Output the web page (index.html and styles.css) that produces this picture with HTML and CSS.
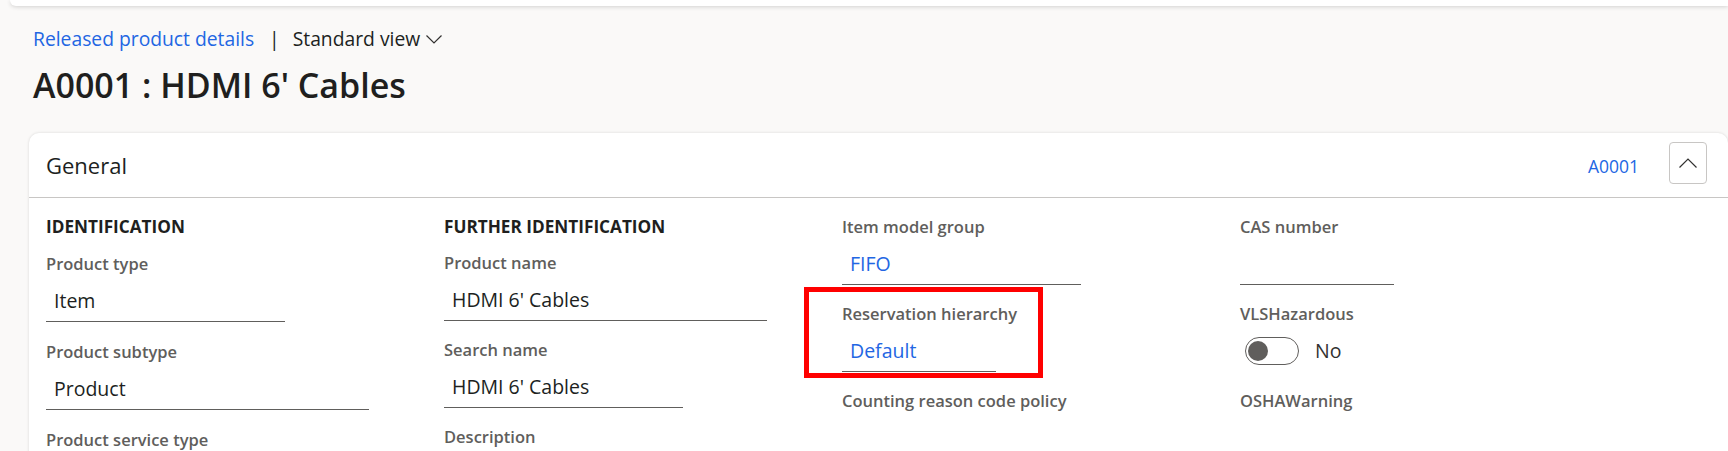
FILE: index.html
```html
<!DOCTYPE html>
<html lang="en">
<head>
<meta charset="utf-8">
<title>Released product details</title>
<link rel="stylesheet" href="styles.css">
</head>
<body>
<div class="topbar"></div>
<header class="page-head">
  <nav class="crumbs">
    <a class="crumb-link">Released product details</a>
    <span class="sep">|</span>
    <span class="view">Standard view</span>
    <svg class="view-chev" width="16" height="9" viewBox="0 0 16 9"><polyline points="0.5,0.5 8,8 15.5,0.5" fill="none" stroke="#323130" stroke-width="1.2"/></svg>
  </nav>
  <h1 class="title">A0001 : HDMI 6' Cables</h1>
</header>

<section class="card">
  <div class="card-head">
    <div class="card-title">General</div>
    <a class="card-id">A0001</a>
    <button class="collapse-btn" type="button" aria-label="Collapse">
      <svg width="18" height="10" viewBox="0 0 18 10"><polyline points="0.5,9.5 9,1 17.5,9.5" fill="none" stroke="#323130" stroke-width="1.2"/></svg>
    </button>
  </div>
  <div class="card-body">
    <div class="col col-wide">
      <div class="section-title">IDENTIFICATION</div>
      <div class="field"><div class="label">Product type</div><div class="input w-md">Item</div></div>
      <div class="field"><div class="label">Product subtype</div><div class="input w-lg">Product</div></div>
      <div class="field"><div class="label">Product service type</div><div class="input w-md"></div></div>
    </div>
    <div class="col">
      <div class="section-title">FURTHER IDENTIFICATION</div>
      <div class="field"><div class="label">Product name</div><div class="input w-lg">HDMI 6' Cables</div></div>
      <div class="field"><div class="label">Search name</div><div class="input w-md">HDMI 6' Cables</div></div>
      <div class="field"><div class="label">Description</div><div class="input w-lg"></div></div>
    </div>
    <div class="col">
      <div class="field"><div class="label">Item model group</div><div class="input w-md link">FIFO</div></div>
      <div class="field"><div class="label">Reservation hierarchy</div><div class="input w-sm link">Default</div><div class="mark"></div></div>
      <div class="field"><div class="label">Counting reason code policy</div><div class="input w-md"></div></div>
    </div>
    <div class="col">
      <div class="field"><div class="label">CAS number</div><div class="input w-sm"></div></div>
      <div class="field"><div class="label">VLSHazardous</div>
        <div class="toggle-row"><span class="toggle"><span class="knob"></span></span><span class="toggle-text">No</span></div>
      </div>
      <div class="field"><div class="label">OSHAWarning</div><div class="input w-sm"></div></div>
    </div>
  </div>
</section>
</body>
</html>
```

FILE: styles.css
```css
html, body {
  margin: 0;
  height: 100%;
  overflow: hidden;
}
body {
  background: #faf9f8;
  font-family: "Open Sans", "Noto Sans", sans-serif;
  color: #201f1e;
}
.topbar {
  height: 6px;
  margin-left: 10px;
  background: #fff;
  border-radius: 0 0 0 8px;
  box-shadow: 0 1px 4px rgba(0, 0, 0, 0.16);
}
.page-head {
  padding-left: 33px;
}
.crumbs {
  display: flex;
  align-items: center;
  margin-top: 20px;
  height: 26px;
  font-size: 19.3px;
  line-height: 26px;
}
.crumb-link {
  color: #2266e3;
}
.sep {
  margin: 0 13px 0 15px;
  color: #201f1e;
}
.view {
  color: #201f1e;
}
.view-chev {
  margin-left: 6px;
}
.title {
  margin: 11px 0 0;
  font-size: 34px;
  font-weight: 600;
  line-height: 44px;
  color: #201f1e;
}
.card {
  margin: 26px 0 0 29px;
  height: 400px;
  background: #fff;
  border-radius: 10px 10px 0 0;
  box-shadow: 0 0 3px rgba(0, 0, 0, 0.14);
}
.card-head {
  display: flex;
  align-items: flex-start;
  height: 65px;
  box-sizing: border-box;
  border-bottom: 1px solid #c8c6c4;
  padding: 0 21px 0 17px;
}
.card-title {
  flex: 1;
  padding-top: 17px;
  font-size: 22px;
  line-height: 30px;
}
.card-id {
  padding-top: 21px;
  margin-right: 30px;
  font-size: 17.5px;
  line-height: 24px;
  color: #2266e3;
}
.collapse-btn {
  margin-top: 9px;
  width: 38px;
  height: 42px;
  box-sizing: border-box;
  border: 1px solid #c8c6c4;
  border-radius: 4px;
  background: #fff;
  padding: 0;
  display: flex;
  align-items: center;
  justify-content: center;
}
.card-body {
  display: grid;
  grid-template-columns: repeat(4, 398px);
  padding: 17px 0 0 17px;
}
.section-title {
  font-size: 17.2px;
  font-weight: 700;
  line-height: 24px;
  margin-bottom: 12px;
  color: #201f1e;
}
.field {
  margin-bottom: 17px;
  position: relative;
}
.col-wide .section-title {
  margin-bottom: 13px;
}
.col-wide .field {
  margin-bottom: 18px;
}
.label {
  font-size: 16.5px;
  font-weight: 600;
  line-height: 24px;
  color: #605e5c;
}
.input {
  height: 46px;
  box-sizing: border-box;
  padding: 12px 0 0 8px;
  border-bottom: 1px solid #605e5c;
  font-size: 19.5px;
  line-height: 26px;
  color: #201f1e;
}
.input.link {
  color: #2266e3;
}
.w-sm { width: 154px; }
.w-md { width: 239px; }
.w-lg { width: 323px; }
.mark {
  position: absolute;
  top: -15px;
  left: -38px;
  width: 239px;
  height: 91px;
  box-sizing: border-box;
  border: 5px solid #ff0000;
  pointer-events: none;
}
.toggle-row {
  height: 46px;
  box-sizing: border-box;
  padding: 3px 0 0 5px;
  display: flex;
  align-items: center;
}
.toggle {
  width: 54px;
  height: 28px;
  box-sizing: border-box;
  border: 1px solid #605e5c;
  border-radius: 14px;
  display: flex;
  align-items: center;
  padding-left: 2px;
}
.knob {
  width: 20px;
  height: 20px;
  border-radius: 50%;
  background: #605e5c;
}
.toggle-text {
  margin-left: 16px;
  font-size: 19.5px;
  line-height: 26px;
  color: #323130;
}
```
